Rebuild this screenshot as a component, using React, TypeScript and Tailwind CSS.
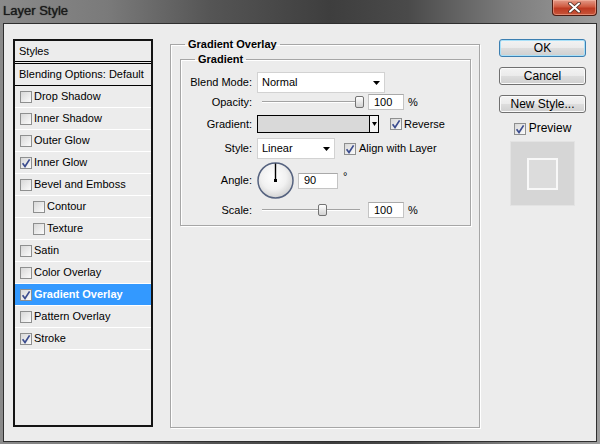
import React from 'react';

const font = "font-['Liberation_Sans',Arial,sans-serif]";

type StyleRow = { label: string; on?: boolean; sub?: boolean; active?: boolean };

const STYLE_ROWS: StyleRow[] = [
  { label: 'Drop Shadow' },
  { label: 'Inner Shadow' },
  { label: 'Outer Glow' },
  { label: 'Inner Glow', on: true },
  { label: 'Bevel and Emboss' },
  { label: 'Contour', sub: true },
  { label: 'Texture', sub: true },
  { label: 'Satin' },
  { label: 'Color Overlay' },
  { label: 'Gradient Overlay', on: true, active: true },
  { label: 'Pattern Overlay' },
  { label: 'Stroke', on: true },
];

// win7 style checkbox
const Check = ({ on }: { on?: boolean }) => (
  <span className="flex h-[12px] w-[12px] shrink-0 items-center justify-center border border-[#8e8f8f] bg-gradient-to-br from-[#d8d8d8] to-[#fbfbfb]">
    {on && (
      <svg width="10" height="10" viewBox="0 0 10 10">
        <path d="M1.6 5.2 L4 8.4 L8.6 1.4" fill="none" stroke="#3b4c8e" strokeWidth="1.7" />
      </svg>
    )}
  </span>
);

const Caret = ({ w = 7 }: { w?: number }) => (
  <svg width={w} height="4" viewBox={`0 0 ${w} 4`}>
    <polygon points={`0,0 ${w},0 ${w / 2},4`} fill="#000" />
  </svg>
);

const Slider = ({ thumb }: { thumb: string }) => (
  <div className="relative h-[14px] w-[104px] shrink-0">
    <div className="absolute left-[5px] top-[6px] h-[2px] w-[98px] border-t border-b border-t-[#a3a3a3] border-b-white" />
    <div
      className={`absolute top-[1px] h-[12px] w-[9px] rounded-[2px] border border-[#737373] bg-gradient-to-b from-white to-[#d2d2d2] ${thumb}`}
    />
  </div>
);

const Field = ({ value, w = 'w-[36px]' }: { value: string; w?: string }) => (
  <div className={`flex h-[16px] ${w} items-center border border-[#c4c4c4] border-t-[#a9a9a9] bg-white pl-[5px] text-[11px] text-black`}>
    {value}
  </div>
);

const Label = ({ children }: { children: React.ReactNode }) => (
  <span className="w-[71px] shrink-0 text-right">{children}</span>
);

const Button = ({ children, primary }: { children: React.ReactNode; primary?: boolean }) => (
  <button
    className={`flex h-[18px] w-[87px] items-center justify-center rounded-[3px] border text-[12px] leading-none text-black bg-[linear-gradient(#f3f3f3_0%,#ebebeb_48%,#dddddd_52%,#cfcfcf_100%)] ${
      primary ? 'border-[#3c7fb1] shadow-[inset_0_0_0_1px_#a8e0f8]' : 'border-[#707070] shadow-[inset_0_0_0_1px_#fafafa]'
    }`}
  >
    {children}
  </button>
);

const Dial = () => (
  <svg width="37" height="37" viewBox="0 0 37 37" className="shrink-0">
    <defs>
      <radialGradient id="dialfill" cx="45%" cy="40%" r="60%">
        <stop offset="0%" stopColor="#ffffff" />
        <stop offset="60%" stopColor="#f1f1f1" />
        <stop offset="100%" stopColor="#d3d3d3" />
      </radialGradient>
    </defs>
    <circle cx="18.5" cy="18.5" r="17.5" fill="url(#dialfill)" stroke="#55627f" strokeWidth="1.5" />
    <line x1="18.5" y1="18.5" x2="18.5" y2="1.5" stroke="#000" strokeWidth="1.4" />
    <rect x="17" y="17" width="3" height="3" fill="#000" />
  </svg>
);

export default function App() {
  return (
    <div
      className={`${font} flex h-[444px] w-[600px] flex-col overflow-hidden bg-[linear-gradient(90deg,#8a8a8a_0%,#7a7a7a_18%,#555555_35%,#3e3e3e_55%,#4a4a4a_68%,#7d7d7d_85%,#9d9d9d_100%)] text-[11px] text-black`}
    >
      {/* title bar */}
      <div className="flex h-[23px] shrink-0 items-start justify-between">
        <span className="ml-[3px] mt-[2px] text-[13px] font-medium leading-[17px] text-[#1a1a1a] [text-shadow:0_0_1px_#1a1a1a]">
          Layer Style
        </span>
        <div className="mr-[3px] flex h-[16px] w-[45px] items-center justify-center rounded-b-[4px] border border-t-0 border-[#4d1c12] bg-[linear-gradient(#e39a88_0%,#cf5a40_45%,#bd3a22_55%,#c7553a_100%)] shadow-[inset_0_0_0_1px_rgba(255,200,180,0.45)]">
          <svg width="13" height="11" viewBox="0 0 13 11">
            <path d="M2 1.5 L11 9.5 M11 1.5 L2 9.5" stroke="#4a2a22" strokeWidth="3.6" strokeLinecap="round" />
            <path d="M2 1.5 L11 9.5 M11 1.5 L2 9.5" stroke="#fff" strokeWidth="2" strokeLinecap="round" />
          </svg>
        </div>
      </div>

      {/* body */}
      <div className="mx-[3px] flex h-[419px] shrink-0 items-start border border-[#2f2f2f] bg-[#ececec] pl-[9px] pt-[15px]">
        {/* styles list */}
        <div className="flex h-[388px] w-[140px] shrink-0 flex-col border-2 border-[#141414]">
          <div className="flex h-[23px] items-center border-b-[3px] border-double border-black pl-[4px]">Styles</div>
          <div className="flex h-[22px] items-center border-b border-black pl-[4px]">Blending Options: Default</div>
          {STYLE_ROWS.map((r) => (
            <div
              key={r.label}
              className={`flex h-[22px] items-center gap-[2px] border-b border-white ${r.sub ? 'pl-[18px]' : 'pl-[5px]'} ${
                r.active ? 'bg-[#3399ff] font-bold text-white' : ''
              }`}
            >
              <Check on={r.on} />
              <span>{r.label}</span>
            </div>
          ))}
        </div>

        {/* gradient overlay group */}
        <fieldset className="ml-[17px] mt-[-1px] h-[390px] w-[310px] shrink-0 border border-[#a6a6a6] shadow-[1px_1px_0_#fff,inset_1px_1px_0_#fff]">
          <legend className="ml-[14px] px-[3px] text-[11px] font-bold leading-[13px]">Gradient Overlay</legend>
          <fieldset className="ml-[9px] mt-[2px] h-[173px] w-[291px] border border-[#a6a6a6] shadow-[1px_1px_0_#fff,inset_1px_1px_0_#fff]">
            <legend className="ml-[14px] px-[3px] font-bold leading-[13px]">Gradient</legend>

            <div className="mt-[6px] flex h-[21px] items-center">
              <Label>Blend Mode:</Label>
              <div className="ml-[5px] flex h-[21px] w-[128px] items-center justify-between border border-[#d2d2d2] bg-white pl-[4px] pr-[4px]">
                <span>Normal</span>
                <Caret />
              </div>
            </div>

            <div className="mt-[1px] flex h-[16px] items-center">
              <Label>Opacity:</Label>
              <div className="ml-[5px] flex items-center">
                <Slider thumb="left-[98px]" />
                <div className="ml-[7px]">
                  <Field value="100" />
                </div>
                <span className="ml-[4px]">%</span>
              </div>
            </div>

            <div className="mt-[5px] flex h-[18px] items-center">
              <Label>Gradient:</Label>
              <div className="ml-[5px] flex h-[18px] w-[122px] border border-black bg-[#d9d9d9]">
                <div className="flex-1" />
                <div className="flex w-[9px] items-center justify-center border-l border-black bg-[#f4f4f4]">
                  <Caret w={5} />
                </div>
              </div>
              <div className="ml-[11px] flex items-center gap-[2px]">
                <Check on />
                <span>Reverse</span>
              </div>
            </div>

            <div className="mt-[5px] flex h-[21px] items-center">
              <Label>Style:</Label>
              <div className="ml-[5px] flex h-[21px] w-[78px] items-center justify-between border border-[#d2d2d2] bg-white pl-[4px] pr-[4px]">
                <span>Linear</span>
                <Caret />
              </div>
              <div className="ml-[9px] flex items-center gap-[3px]">
                <Check on />
                <span>Align with Layer</span>
              </div>
            </div>

            <div className="mt-[3px] flex h-[37px] items-center">
              <Label>Angle:</Label>
              <div className="ml-[5px] flex items-center">
                <Dial />
                <div className="ml-[4px]">
                  <Field value="90" w="w-[40px]" />
                </div>
                <span className="ml-[5px] self-start pt-[9px] leading-none">°</span>
              </div>
            </div>

            <div className="mt-[3px] flex h-[16px] items-center">
              <Label>Scale:</Label>
              <div className="ml-[5px] flex items-center">
                <Slider thumb="left-[61px]" />
                <div className="ml-[7px]">
                  <Field value="100" />
                </div>
                <span className="ml-[4px]">%</span>
              </div>
            </div>
          </fieldset>
        </fieldset>

        {/* buttons */}
        <div className="ml-[19px] flex w-[87px] shrink-0 flex-col items-center">
          <Button primary>OK</Button>
          <div className="mt-[10px]">
            <Button>Cancel</Button>
          </div>
          <div className="mt-[10px]">
            <Button>New Style...</Button>
          </div>
          <div className="mt-[9px] flex h-[13px] items-center gap-[3px] text-[12px] leading-[13px]">
            <Check on />
            <span>Preview</span>
          </div>
          <div className="mt-[6px] flex h-[65px] w-[65px] items-center justify-center border border-[#e3e3e3] bg-[#d6d6d6]">
            <div className="h-[32px] w-[31px] border-2 border-[#f8f8f8] bg-[#dcdcdc]" />
          </div>
        </div>
      </div>
    </div>
  );
}
